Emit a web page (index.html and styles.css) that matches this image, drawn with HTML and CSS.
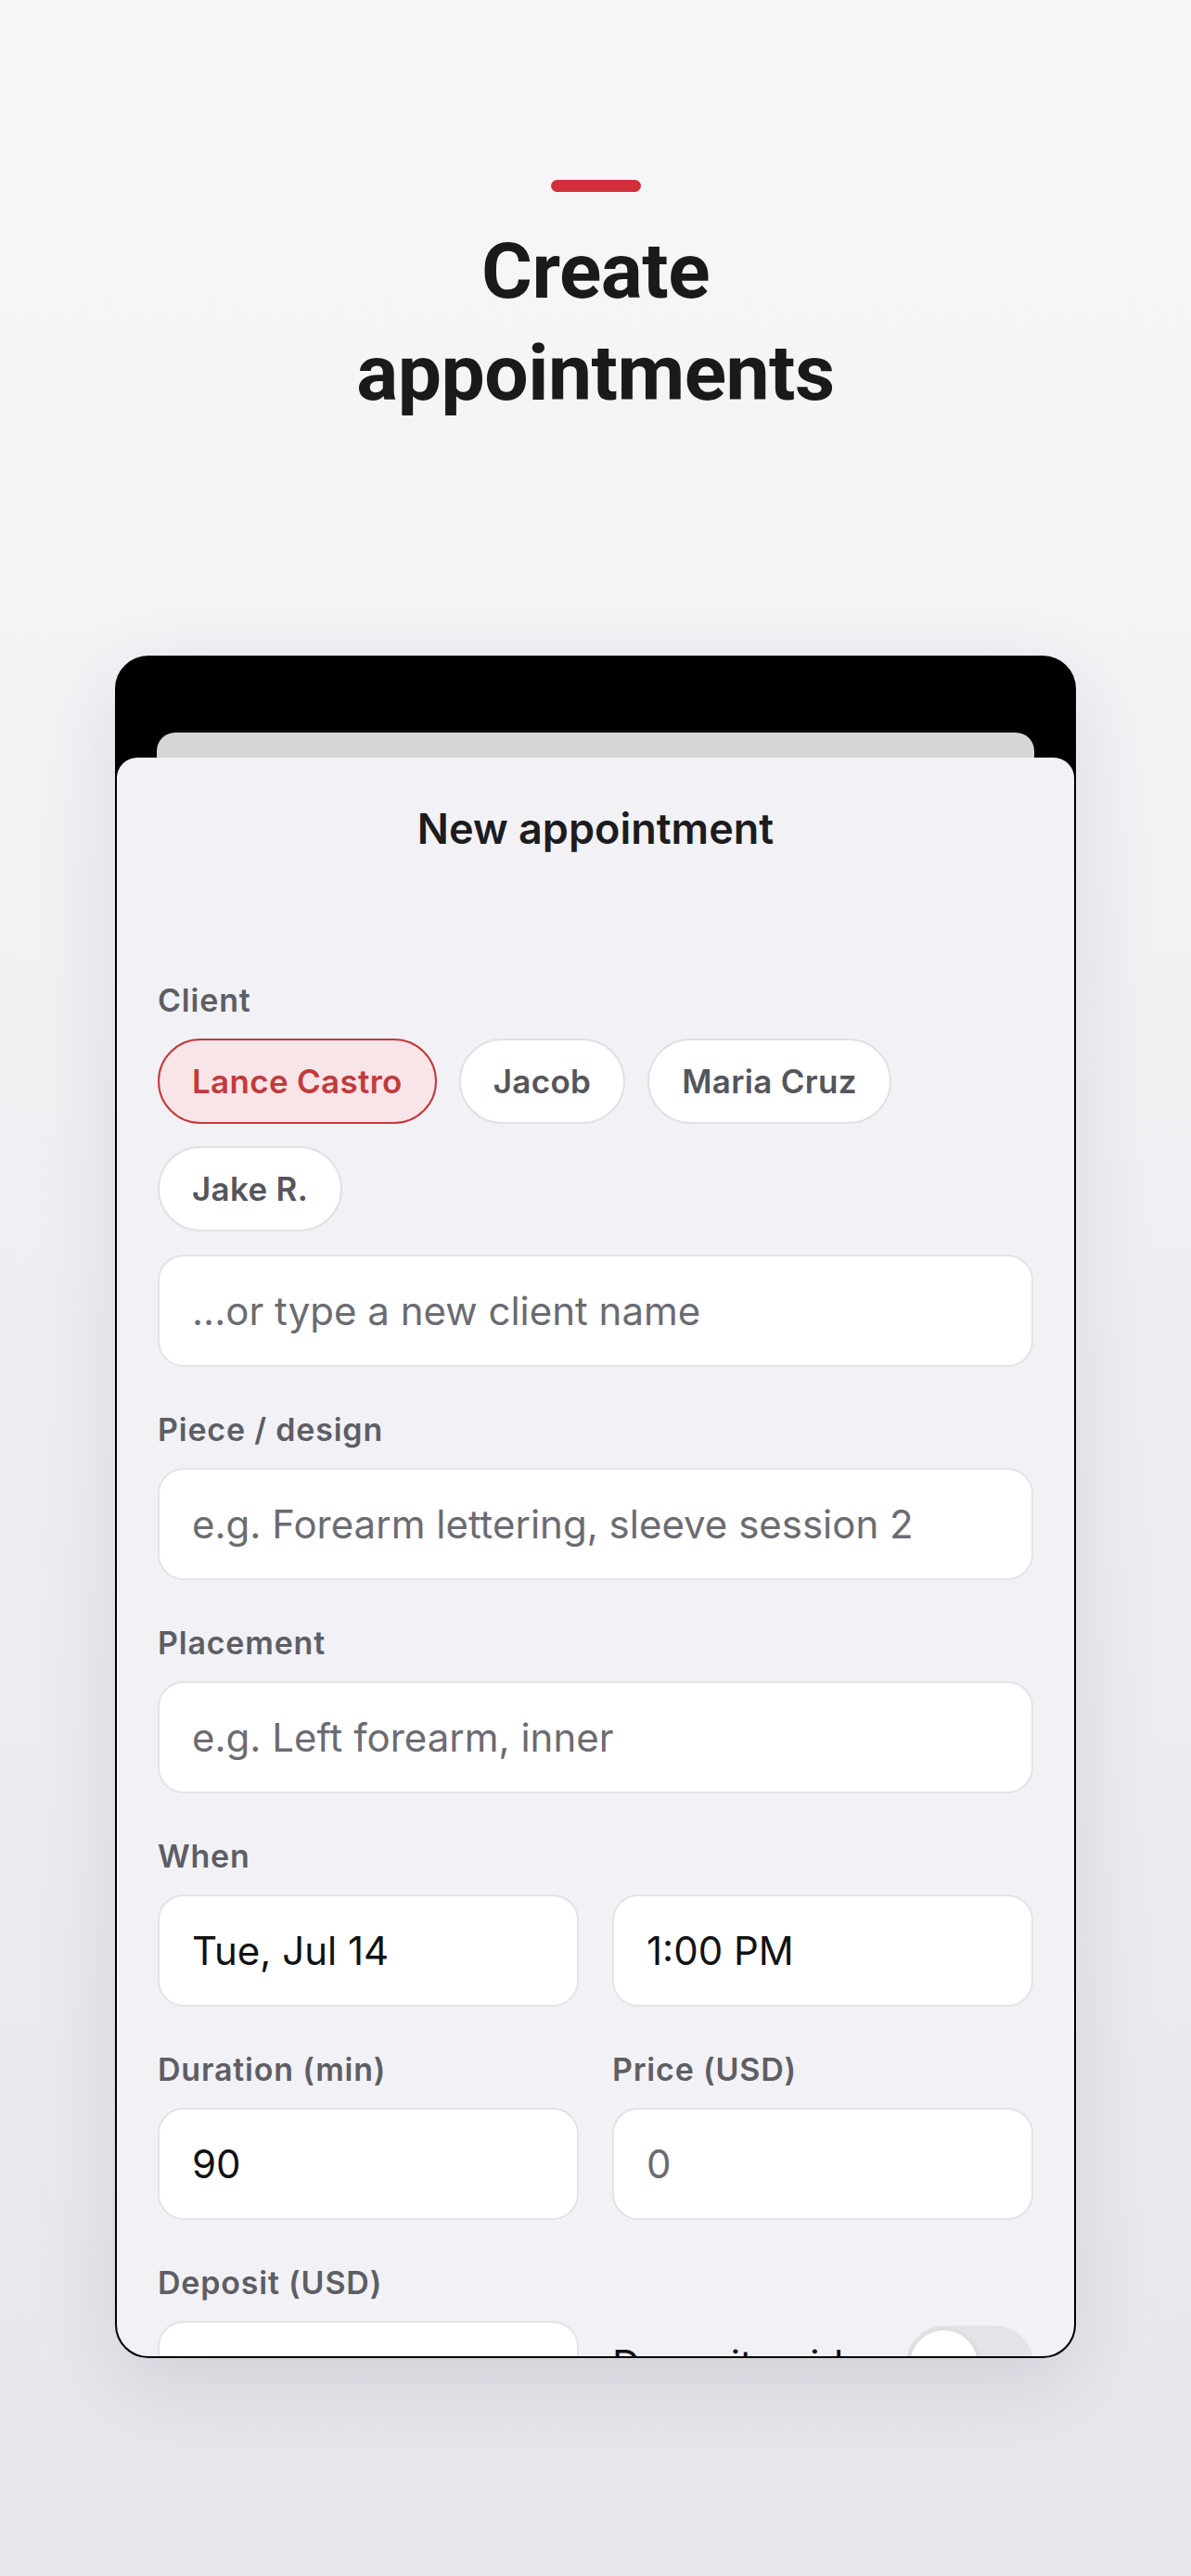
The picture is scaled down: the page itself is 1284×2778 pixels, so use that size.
FILE: index.html
```html
<!DOCTYPE html>
<html lang="en">
<head>
<meta charset="utf-8">
<title>Create appointments</title>
<link rel="stylesheet" href="styles.css">
</head>
<body>
<header class="hero">
  <div class="hero-bar"></div>
  <h1 class="hero-title">Create<br>appointments</h1>
</header>

<div class="device">
  <div class="back-sheet"></div>
  <div class="sheet">
    <h2 class="sheet-title">New appointment</h2>

    <div class="form">
      <div class="field">
        <div class="label">Client</div>
        <div class="chips">
          <span class="chip chip-active">Lance Castro</span>
          <span class="chip">Jacob</span>
          <span class="chip">Maria Cruz</span>
          <span class="chip">Jake R.</span>
        </div>
        <div class="input input-after-chips placeholder">...or type a new client name</div>
      </div>

      <div class="field">
        <div class="label">Piece / design</div>
        <div class="input placeholder">e.g. Forearm lettering, sleeve session 2</div>
      </div>

      <div class="field">
        <div class="label">Placement</div>
        <div class="input placeholder">e.g. Left forearm, inner</div>
      </div>

      <div class="field">
        <div class="label">When</div>
        <div class="pair">
          <div class="input">Tue, Jul 14</div>
          <div class="input">1:00 PM</div>
        </div>
      </div>

      <div class="pair field">
        <div>
          <div class="label">Duration (min)</div>
          <div class="input">90</div>
        </div>
        <div>
          <div class="label">Price (USD)</div>
          <div class="input placeholder">0</div>
        </div>
      </div>

      <div class="pair field">
        <div>
          <div class="label">Deposit (USD)</div>
          <div class="input placeholder"></div>
        </div>
        <div class="toggle-row">
          <span class="toggle-text">Deposit paid</span>
          <span class="toggle"><span class="knob"></span></span>
        </div>
      </div>
    </div>
  </div>
</div>
</body>
</html>
```

FILE: styles.css
```css
html, body {
  margin: 0;
  padding: 0;
}

body {
  width: 1284px;
  min-height: 2778px;
  background: linear-gradient(180deg, #f7f7f9 0%, #f1f1f4 40%, #e7e6eb 100%);
  font-family: Inter, "Noto Sans", sans-serif;
  color: #1c1c1e;
  padding-top: 194px;
  box-sizing: border-box;
}

.hero {
  display: flex;
  flex-direction: column;
  align-items: center;
}

.hero-bar {
  width: 97px;
  height: 13px;
  border-radius: 7px;
  background: #d32f3a;
}

.hero-title {
  margin: 31px 0 0;
  font-family: Roboto, "Liberation Sans", sans-serif;
  font-weight: 700;
  font-size: 84px;
  line-height: 110px;
  letter-spacing: -0.5px;
  text-align: center;
  color: #1a1a1c;
}

.device {
  width: 1036px;
  height: 1836px;
  box-sizing: border-box;
  margin: 249px auto 0;
  background: #000;
  border: 2px solid #000;
  border-radius: 36px;
  overflow: hidden;
  display: flex;
  flex-direction: column;
  box-shadow: 0 30px 90px rgba(40, 40, 70, 0.12);
}

.back-sheet {
  margin: 81px 43px 0;
  height: 27px;
  background: #d6d6d6;
  border-radius: 20px 20px 0 0;
  flex: none;
}

.sheet {
  flex: 1;
  min-height: 0;
  background: #f2f2f6;
  border-radius: 22px 22px 0 0;
  overflow: hidden;
  padding: 0 44px;
}

.sheet-title {
  margin: 50px 0 0;
  font-size: 45px;
  line-height: 54px;
  font-weight: 600;
  text-align: center;
  color: #1c1c1e;
}

.form {
  padding-top: 137px;
}

.field + .field {
  margin-top: 47px;
}

.label {
  font-size: 34px;
  line-height: 42px;
  font-weight: 600;
  letter-spacing: 0.8px;
  color: #5e5e65;
  margin-bottom: 20px;
}

.chips {
  display: flex;
  flex-wrap: wrap;
  gap: 24px;
}

.chip {
  height: 92px;
  box-sizing: border-box;
  padding: 0 35px;
  border: 2px solid #e1e1e5;
  border-radius: 46px;
  background: #fff;
  display: flex;
  align-items: center;
  font-size: 35px;
  letter-spacing: 0.3px;
  font-weight: 600;
  color: #55555c;
}

.chip-active {
  background: #f7e5e7;
  border-color: #c4393c;
  color: #c33a3d;
}

.input {
  height: 121px;
  box-sizing: border-box;
  background: #fff;
  border: 2px solid #e3e3e7;
  border-radius: 28px;
  padding: 0 35px;
  display: flex;
  align-items: center;
  font-size: 42px;
  color: #111113;
}

.input-after-chips {
  margin-top: 25px;
}

.placeholder {
  color: #6b6b72;
}

.pair {
  display: grid;
  grid-template-columns: 1fr 1fr;
  column-gap: 36px;
}

.toggle-row {
  padding-top: 67px;
  display: flex;
  align-items: center;
  justify-content: space-between;
  align-self: start;
}

.toggle-text {
  font-size: 42px;
  color: #111113;
}

.toggle {
  position: relative;
  width: 137px;
  height: 82px;
  border-radius: 41px;
  background: #e4e4e8;
  flex: none;
}

.knob {
  position: absolute;
  left: 4px;
  top: 5px;
  width: 73px;
  height: 73px;
  border-radius: 50%;
  background: #fff;
  box-shadow: 0 3px 8px rgba(0, 0, 0, 0.15), 0 1px 2px rgba(0, 0, 0, 0.08);
}
```
